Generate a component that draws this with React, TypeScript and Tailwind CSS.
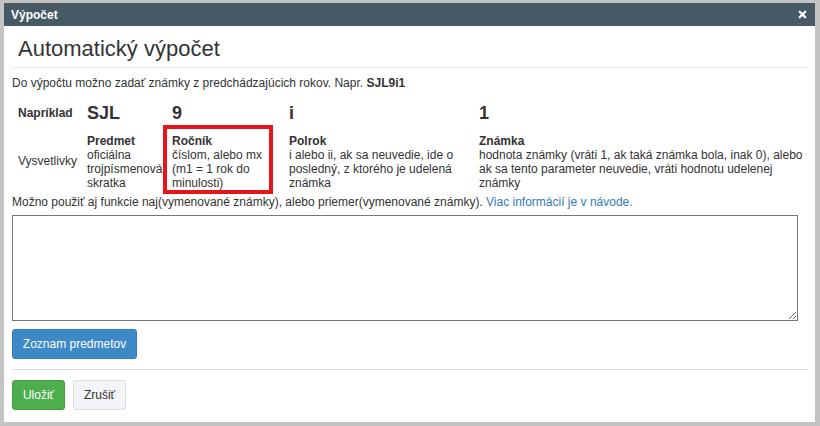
import { X } from "lucide-react";

const font = { fontFamily: '"Liberation Sans", Arial, sans-serif' };

export default function App() {
  return (
    <div className="w-[820px] h-[426px] bg-[#c3c3c3] pt-[3px] pl-[4px] overflow-hidden text-[12px] leading-[14px] text-[#333]" style={font}>
      <div className="w-[811px] h-[419px] bg-white flex flex-col">
        {/* Title bar */}
        <div className="h-[23px] bg-[#465a66] flex items-center px-[7px] shrink-0">
          <span className="text-white font-bold text-[12px]">Výpočet</span>
          <X className="ml-auto w-[11px] h-[11px] text-white" strokeWidth={5} />
        </div>

        <div className="pl-[8px] pr-[7px] flex flex-col">
          <div className="pt-[11px] pb-[6px] pl-[6px] border-b border-[#e5e5e5]">
            <h3 className="text-[22px] leading-[24px] text-[#333] font-light">Automatický výpočet</h3>
          </div>

          <p className="mt-[8px]">
            Do výpočtu možno zadať známky z predchádzajúcich rokov. Napr. <b>SJL9i1</b>
          </p>

          {/* Example table */}
          <div className="ml-[6px] mt-[10px] grid grid-cols-[69px_76px_126px_190px_327px]">
            <div className="h-[25px] flex items-center font-bold">Napríklad</div>
            <div className="h-[25px] flex items-center font-bold text-[18px]">SJL</div>
            <div className="h-[25px] flex items-center font-bold text-[18px] pl-[9px]">9</div>
            <div className="h-[25px] flex items-center font-bold text-[18px]">i</div>
            <div className="h-[25px] flex items-center font-bold text-[18px]">1</div>

            <div className="flex items-center pt-[3px]">Vysvetlivky</div>
            <div className="pt-[9px]">
              <b>Predmet</b>
              <br />
              oficiálna trojpísmenová skratka
            </div>
            <div>
              <div className="w-[110px] border-4 border-[#e8141c] pt-[5px] pl-[5px] pr-[3px]">
                <b>Ročník</b>
                <br />
                číslom, alebo mx (m1 = 1 rok do minulosti)
              </div>
            </div>
            <div className="pt-[9px] pr-[10px]">
              <b>Polrok</b>
              <br />
              i alebo ii, ak sa neuvedie, ide o posledný, z ktorého je udelená známka
            </div>
            <div className="pt-[9px]">
              <b>Známka</b>
              <br />
              hodnota známky (vráti 1, ak taká známka bola, inak 0), alebo ak sa tento parameter neuvedie, vráti hodnotu udelenej známky
            </div>
          </div>

          <p className="mt-[1px]">
            Možno použiť aj funkcie naj(vymenované známky), alebo priemer(vymenované známky).{" "}
            <span className="text-[#337ab7]">Viac informácií je v návode.</span>
          </p>

          <textarea className="mt-[6px] w-[786px] h-[106px] border border-[#767676] rounded-none resize-y outline-none" />

          <div>
            <button className="mt-[8px] h-[30px] w-[125px] rounded-[3px] bg-[#3d88c6] border border-[#357ebd] text-white text-[12px]">
              Zoznam predmetov
            </button>
          </div>

          <div className="mt-[10px] border-t border-[#dddddd]" />

          <div className="mt-[10px] flex gap-[8px]">
            <button className="h-[30px] w-[53px] rounded-[3px] bg-[#4cae4c] border border-[#449d44] text-white text-[12px]">
              Uložiť
            </button>
            <button className="h-[30px] w-[53px] rounded-[3px] bg-[#f4f5f9] border border-[#dcdcdc] text-[#333] text-[12px]">
              Zrušiť
            </button>
          </div>
        </div>
      </div>
    </div>
  );
}
